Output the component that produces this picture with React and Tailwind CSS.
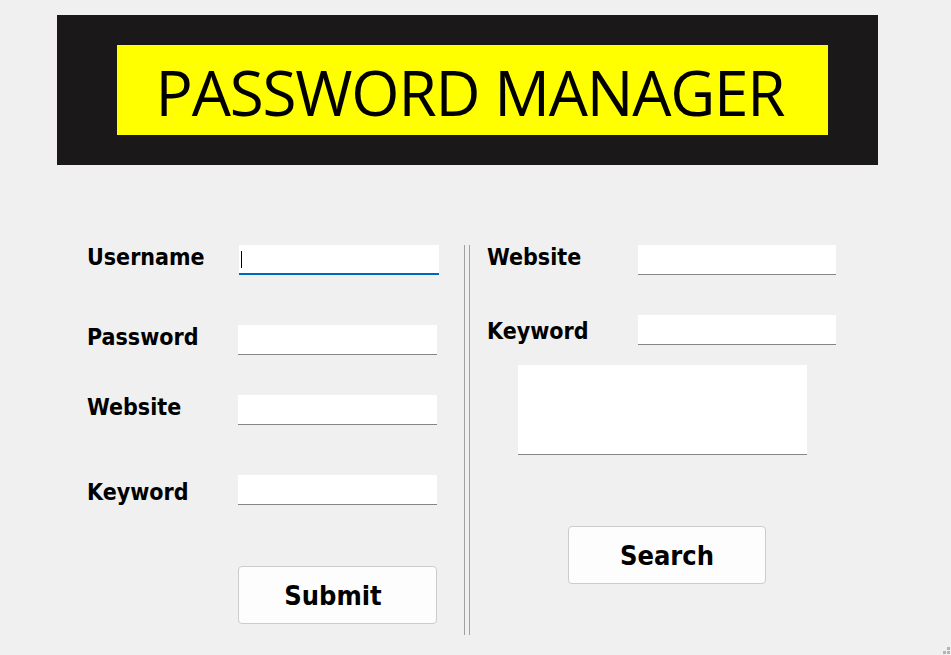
import React from "react";

const labelFont = {
  fontFamily: '"DejaVu Sans Condensed", "DejaVu Sans", sans-serif',
};

function Field({ focused = false, className = "" }) {
  return (
    <div
      className={
        "relative h-[30px] bg-white " +
        (focused ? "border-b-2 border-[#0067c0] " : "border-b border-[#858585] ") +
        className
      }
    >
      {focused && <div className="absolute left-[2px] top-[6px] h-[17px] w-px bg-black" />}
    </div>
  );
}

function Label({ children, className = "" }) {
  return (
    <div
      className={"text-[23px] leading-none font-bold text-black font-stretch-condensed " + className}
      style={labelFont}
    >
      {children}
    </div>
  );
}

function Btn({ children, className = "" }) {
  return (
    <div
      className={
        "flex items-center justify-center h-[58px] bg-[#fdfdfd] border border-[#cccccc] rounded-[4px] text-[27px] font-bold text-black font-stretch-condensed " +
        className
      }
      style={labelFont}
    >
      {children}
    </div>
  );
}

export default function App() {
  return (
    <div className="relative w-[951px] h-[655px] bg-[#f0f0f0] overflow-hidden">
      <div className="pt-[15px] pl-[57px]">
        <div className="w-[821px] h-[150px] bg-[#1b1819] flex items-center pl-[60px]">
          <div className="w-[711px] h-[90px] bg-[#ffff00] flex items-center justify-center pr-[5px]">
            <span
              className="text-[62px] leading-none text-black tracking-[-1.2px] pt-[3px]"
              style={{ fontFamily: '"Open Sans", "Noto Sans", sans-serif' }}
            >
              PASSWORD MANAGER
            </span>
          </div>
        </div>
      </div>

      <div className="flex mt-[80px] pl-[87px]">
        {/* left column */}
        <div className="w-[377px] flex flex-col">
          <div className="flex">
            <Label className="w-[152px] pt-[1px]">Username</Label>
            <Field focused className="w-[200px]" />
          </div>
          <div className="flex mt-[50px]">
            <Label className="w-[151px] pt-[1px]">Password</Label>
            <Field className="w-[199px]" />
          </div>
          <div className="flex mt-[40px]">
            <Label className="w-[151px] pt-[1px]">Website</Label>
            <Field className="w-[199px]" />
          </div>
          <div className="flex mt-[50px]">
            <Label className="w-[151px] pt-[6px]">Keyword</Label>
            <Field className="w-[199px]" />
          </div>
          <div className="flex mt-[61px] pl-[151px]">
            <Btn className="w-[199px] pr-[9px] pt-[3px]">Submit</Btn>
          </div>
        </div>

        {/* divider */}
        <div className="flex justify-between w-[6px] h-[390px]">
          <div className="w-px h-full bg-[#a0a0a0]" />
          <div className="w-px h-full bg-[#a0a0a0]" />
        </div>

        {/* right column */}
        <div className="flex flex-col pl-[17px]">
          <div className="flex">
            <Label className="w-[151px] pt-[1px]">Website</Label>
            <Field className="w-[198px]" />
          </div>
          <div className="flex mt-[40px]">
            <Label className="w-[151px] pt-[5px]">Keyword</Label>
            <Field className="w-[198px]" />
          </div>
          <div className="ml-[31px] mt-[20px] w-[289px] h-[90px] bg-white border-b border-[#858585]" />
          <div className="ml-[81px] mt-[71px]">
            <Btn className="w-[198px] pt-[3px]">Search</Btn>
          </div>
        </div>
      </div>

      <svg className="absolute right-[1px] bottom-[1px]" width="8" height="8" viewBox="0 0 8 8">
        <rect x="5" y="1" width="3" height="3" fill="#b4b4b4" />
        <rect x="1" y="5" width="3" height="3" fill="#b4b4b4" />
        <rect x="5" y="5" width="3" height="3" fill="#b4b4b4" />
      </svg>
    </div>
  );
}
